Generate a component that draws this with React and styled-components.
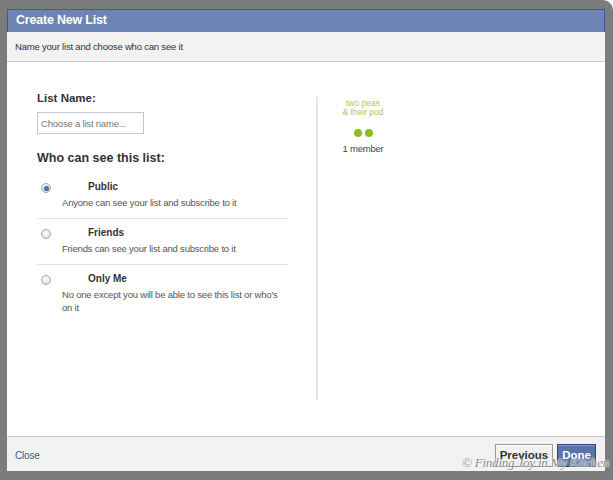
import * as React from 'react'
import styled, { createGlobalStyle } from 'styled-components'

const GlobalStyle = createGlobalStyle`
  html, body {
    margin: 0;
    padding: 0;
    background: #ffffff;
  }
  body {
    font-family: "Liberation Sans", Arial, sans-serif;
  }
`

const Frame = styled.div`
  position: relative;
  width: 613px;
  height: 480px;
  box-sizing: border-box;
  background: #7c7c7c;
  border-top-right-radius: 10px;
  padding: 9px 8px 9px 7px;
`

const Dialog = styled.div`
  display: flex;
  flex-direction: column;
  height: 100%;
  background: white;
`

const Header = styled.div`
  height: 23px;
  box-sizing: border-box;
  background: #6d84b4;
  border: 1px solid #3b5998;
  border-bottom: none;
  color: white;
  font-size: 12.5px;
  font-weight: bold;
  line-height: 21px;
  padding-left: 8px;
  letter-spacing: -0.2px;
`

const SubHeader = styled.div`
  height: 30px;
  box-sizing: border-box;
  background: #f2f2f2;
  border-bottom: 1px solid #cccccc;
  color: #333;
  font-size: 9.5px;
  letter-spacing: -0.2px;
  line-height: 29px;
  padding-left: 8px;
`

const Body = styled.div`
  flex: 1;
  display: flex;
  padding: 29px 0 0 30px;
  box-sizing: border-box;
`

const LeftColumn = styled.div`
  width: 251px;
`

const Label = styled.div`
  color: #333;
  font-size: 11.5px;
  font-weight: bold;
  line-height: 14px;
`

const NameInput = styled.input`
  display: block;
  margin-top: 7px;
  width: 107px;
  height: 22px;
  box-sizing: border-box;
  border: 1px solid #bdc7d8;
  padding: 0 3px;
  font-family: "Liberation Sans", Arial, sans-serif;
  font-size: 9.5px;
  letter-spacing: -0.2px;
  color: #333;
  &::placeholder {
    color: #777;
  }
`

const Heading = styled(Label)`
  margin-top: 17px;
  font-size: 12.5px;
`

const Options = styled.div`
  margin-top: 15px;
`

const Option = styled.div`
  display: grid;
  grid-template-columns: 25px 1fr;
  padding: ${p => (p.$first ? '0' : '7px')} 0 9px;
  border-top: ${p => (p.$first ? 'none' : '1px solid #e2e2e2')};
`

const Radio = styled.span`
  grid-row: 1;
  width: 10px;
  height: 10px;
  margin: 3px 0 0 4px;
  border-radius: 50%;
  border: 1px solid #a8a8a8;
  background: radial-gradient(circle at 50% 40%, #ffffff 0%, #e6e6e6 60%, #cfcfcf 100%);
  box-sizing: border-box;
  display: flex;
  align-items: center;
  justify-content: center;
  &::after {
    content: '';
    display: ${p => (p.$checked ? 'block' : 'none')};
    width: 5px;
    height: 5px;
    border-radius: 50%;
    background: radial-gradient(circle, #5a8fd0 0%, #1d3f72 100%);
  }
`

const OptionTitle = styled.div`
  grid-row: 1;
  grid-column: 2;
  padding-left: 26px;
  color: #333;
  font-size: 10px;
  font-weight: bold;
  line-height: 14px;
`

const OptionDesc = styled.div`
  grid-column: 1 / span 2;
  padding-left: 25px;
  color: #555;
  font-size: 9.5px;
  letter-spacing: -0.2px;
  line-height: 13px;
  margin-top: 2px;
`

const Divider = styled.div`
  width: 2px;
  height: 303px;
  margin: 6px 0 0 28px;
  background: #e4e4e4;
`

const RightColumn = styled.div`
  width: 90px;
  display: flex;
  flex-direction: column;
  align-items: center;
  padding-top: 8px;
`

const Logo = styled.div`
  color: #a9cc5a;
  font-size: 8.5px;
  line-height: 9px;
  text-align: center;
`

const Dots = styled.div`
  display: flex;
  gap: 3px;
  margin-top: 12px;
`

const Dot = styled.span`
  width: 8px;
  height: 8px;
  border-radius: 50%;
  background: #8dbd22;
`

const Members = styled.div`
  margin-top: 6px;
  color: #444;
  font-size: 9.5px;
  letter-spacing: -0.2px;
`

const Footer = styled.div`
  position: relative;
  height: 35px;
  box-sizing: border-box;
  background: #f2f2f2;
  border-top: 1px solid #cccccc;
  display: flex;
  align-items: center;
  padding: 0 9px 0 8px;
`

const CloseLink = styled.a`
  color: #3b5998;
  font-size: 10px;
  letter-spacing: -0.2px;
  text-decoration: none;
  margin-top: 2px;
`

const Buttons = styled.div`
  margin-left: auto;
  display: flex;
  gap: 4px;
  margin-top: 2px;
`

const Button = styled.button`
  height: 23px;
  padding: 0 4px;
  font-family: "Liberation Sans", Arial, sans-serif;
  font-size: 11.5px;
  font-weight: bold;
  color: ${p => (p.$primary ? 'white' : '#333')};
  background: ${p => (p.$primary ? '#5b74a8' : '#f0f0f0')};
  border: 1px solid ${p => (p.$primary ? '#29447e' : '#999')};
  border-bottom-color: ${p => (p.$primary ? '#1a356e' : '#888')};
  box-shadow: inset 0 1px 0 ${p => (p.$primary ? '#8a9cc2' : '#fff')};
`

const Watermark = styled.div`
  position: absolute;
  right: -4px;
  bottom: 1px;
  font-family: "Liberation Serif", "Times New Roman", serif;
  font-style: italic;
  font-size: 13px;
  line-height: 15px;
  color: #8a8a8a;
  text-shadow: 0 0 2px #fff, 0 0 2px #fff;
  letter-spacing: -0.2px;
  white-space: nowrap;
  pointer-events: none;
`

const options = [
  { title: 'Public', desc: 'Anyone can see your list and subscribe to it', checked: true },
  { title: 'Friends', desc: 'Friends can see your list and subscribe to it' },
  { title: 'Only Me', desc: "No one except you will be able to see this list or who's on it" }
]

export default function App () {
  return (
    <>
      <GlobalStyle />
      <Frame>
        <Dialog>
          <Header>Create New List</Header>
          <SubHeader>Name your list and choose who can see it</SubHeader>
          <Body>
            <LeftColumn>
              <Label>List Name:</Label>
              <NameInput placeholder='Choose a list name...' />
              <Heading>Who can see this list:</Heading>
              <Options>
                {options.map((o, i) => (
                  <Option key={o.title} $first={i === 0}>
                    <Radio $checked={o.checked} />
                    <OptionTitle>{o.title}</OptionTitle>
                    <OptionDesc>{o.desc}</OptionDesc>
                  </Option>
                ))}
              </Options>
            </LeftColumn>
            <Divider />
            <RightColumn>
              <Logo>two peas<br />&amp; their pod</Logo>
              <Dots><Dot /><Dot /></Dots>
              <Members>1 member</Members>
            </RightColumn>
          </Body>
          <Footer>
            <CloseLink href='#'>Close</CloseLink>
            <Buttons>
              <Button>Previous</Button>
              <Button $primary>Done</Button>
            </Buttons>
            <Watermark>© Finding Joy in My Kitchen</Watermark>
          </Footer>
        </Dialog>
      </Frame>
    </>
  )
}
